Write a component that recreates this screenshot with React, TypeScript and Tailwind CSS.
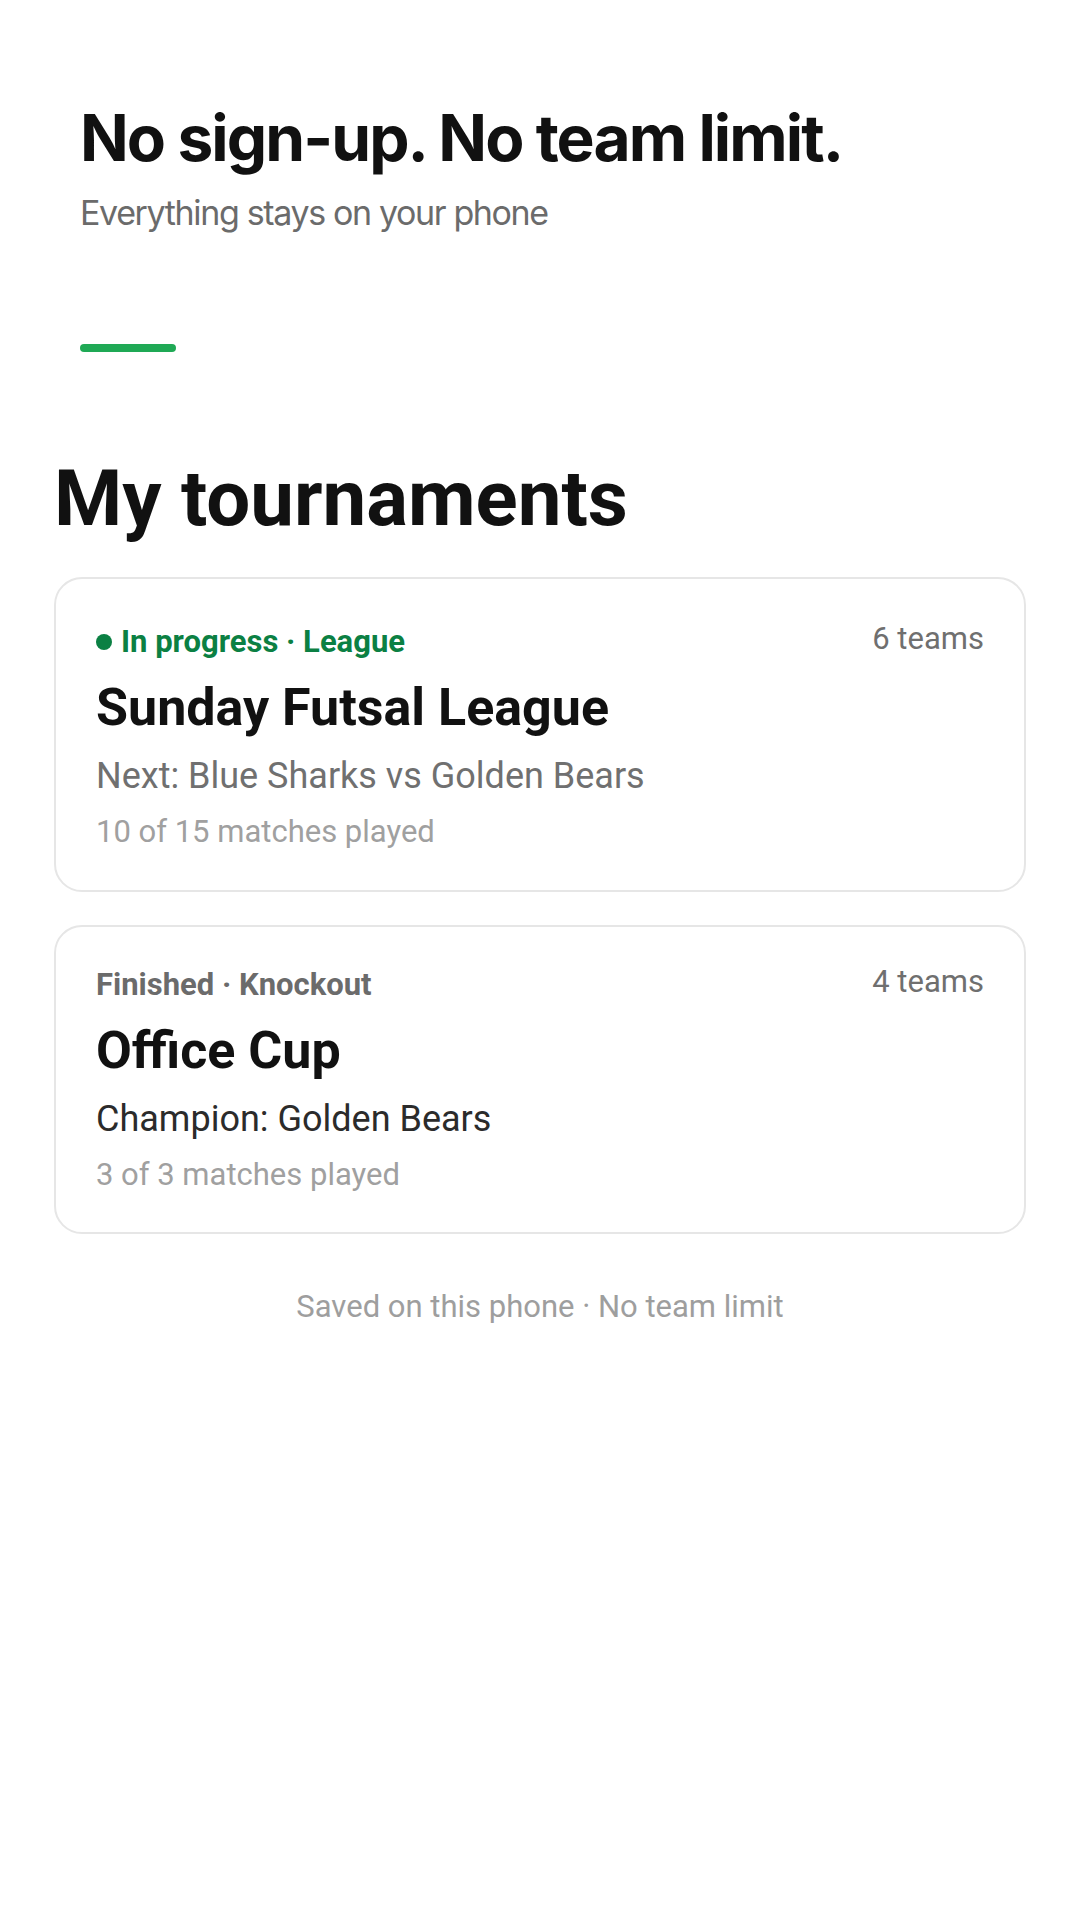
import React from 'react';

type Tournament = {
  status: string;
  format: string;
  live: boolean;
  teams: number;
  name: string;
  line: string;
  played: string;
};

const tournaments: Tournament[] = [
  {
    status: 'In progress',
    format: 'League',
    live: true,
    teams: 6,
    name: 'Sunday Futsal League',
    line: 'Next: Blue Sharks vs Golden Bears',
    played: '10 of 15 matches played',
  },
  {
    status: 'Finished',
    format: 'Knockout',
    live: false,
    teams: 4,
    name: 'Office Cup',
    line: 'Champion: Golden Bears',
    played: '3 of 3 matches played',
  },
];

function TournamentCard({ t }: { t: Tournament }) {
  return (
    <div
      className={
        t.live
          ? 'rounded-[28px] border-2 border-[#e6e6e6] bg-white px-[40px] pt-[45px] pb-[38px]'
          : 'rounded-[28px] border-2 border-[#e6e6e6] bg-white px-[40px] pt-[40px] pb-[37px]'
      }
    >
      <div className="flex items-start justify-between">
        <div
          className={
            t.live
              ? 'flex items-center text-[31px] leading-[36px] font-bold text-[#0b8043]'
              : 'flex items-center text-[31px] leading-[36px] font-bold text-[#6b6b6b]'
          }
        >
          {t.live && <span className="mr-[9px] inline-block h-4 w-4 rounded-full bg-[#0b8043]" />}
          <span>
            {t.status} · {t.format}
          </span>
        </div>
        <div className="text-[31px] leading-[30px] text-[#6f6f6f]">{t.teams} teams</div>
      </div>
      <div className="mt-[18px] text-[52px] leading-[60px] font-bold text-[#111111]">{t.name}</div>
      <div
        className={
          t.live
            ? 'mt-[16px] text-[36px] leading-[44px] text-[#707070]'
            : 'mt-[16px] text-[36px] leading-[44px] text-[#2b2b2b]'
        }
      >
        {t.line}
      </div>
      <div className="mt-[14px] text-[31px] leading-[40px] text-[#a0a0a0]">{t.played}</div>
    </div>
  );
}

export default function App() {
  return (
    <div className="min-h-[1920px] w-[1080px] bg-white font-['Roboto',sans-serif]">
      <div className="px-20 pt-[102px]">
        <h1 className="font-['Inter',sans-serif] text-[64px] leading-[72px] font-bold tracking-[-0.03em] text-[#111111]">
          No sign-up. No team limit.
        </h1>
        <p className="mt-[17px] font-['Inter',sans-serif] text-[34px] leading-[44px] tracking-[-0.04em] text-[#6b6b6b]">
          Everything stays on your phone
        </p>
        <div className="mt-[109px] h-2 w-24 rounded-full bg-[#1fa955]" />
      </div>

      <div className="px-[54px] pt-[102px]">
        <h2 className="text-[78px] leading-[90px] font-bold text-[#111111]">My tournaments</h2>
        <div className="mt-[33px] flex flex-col gap-[33px]">
          {tournaments.map((t) => (
            <TournamentCard key={t.name} t={t} />
          ))}
        </div>
        <p className="mt-[53px] text-center text-[31px] leading-[40px] text-[#9e9e9e]">
          Saved on this phone · No team limit
        </p>
      </div>
    </div>
  );
}
